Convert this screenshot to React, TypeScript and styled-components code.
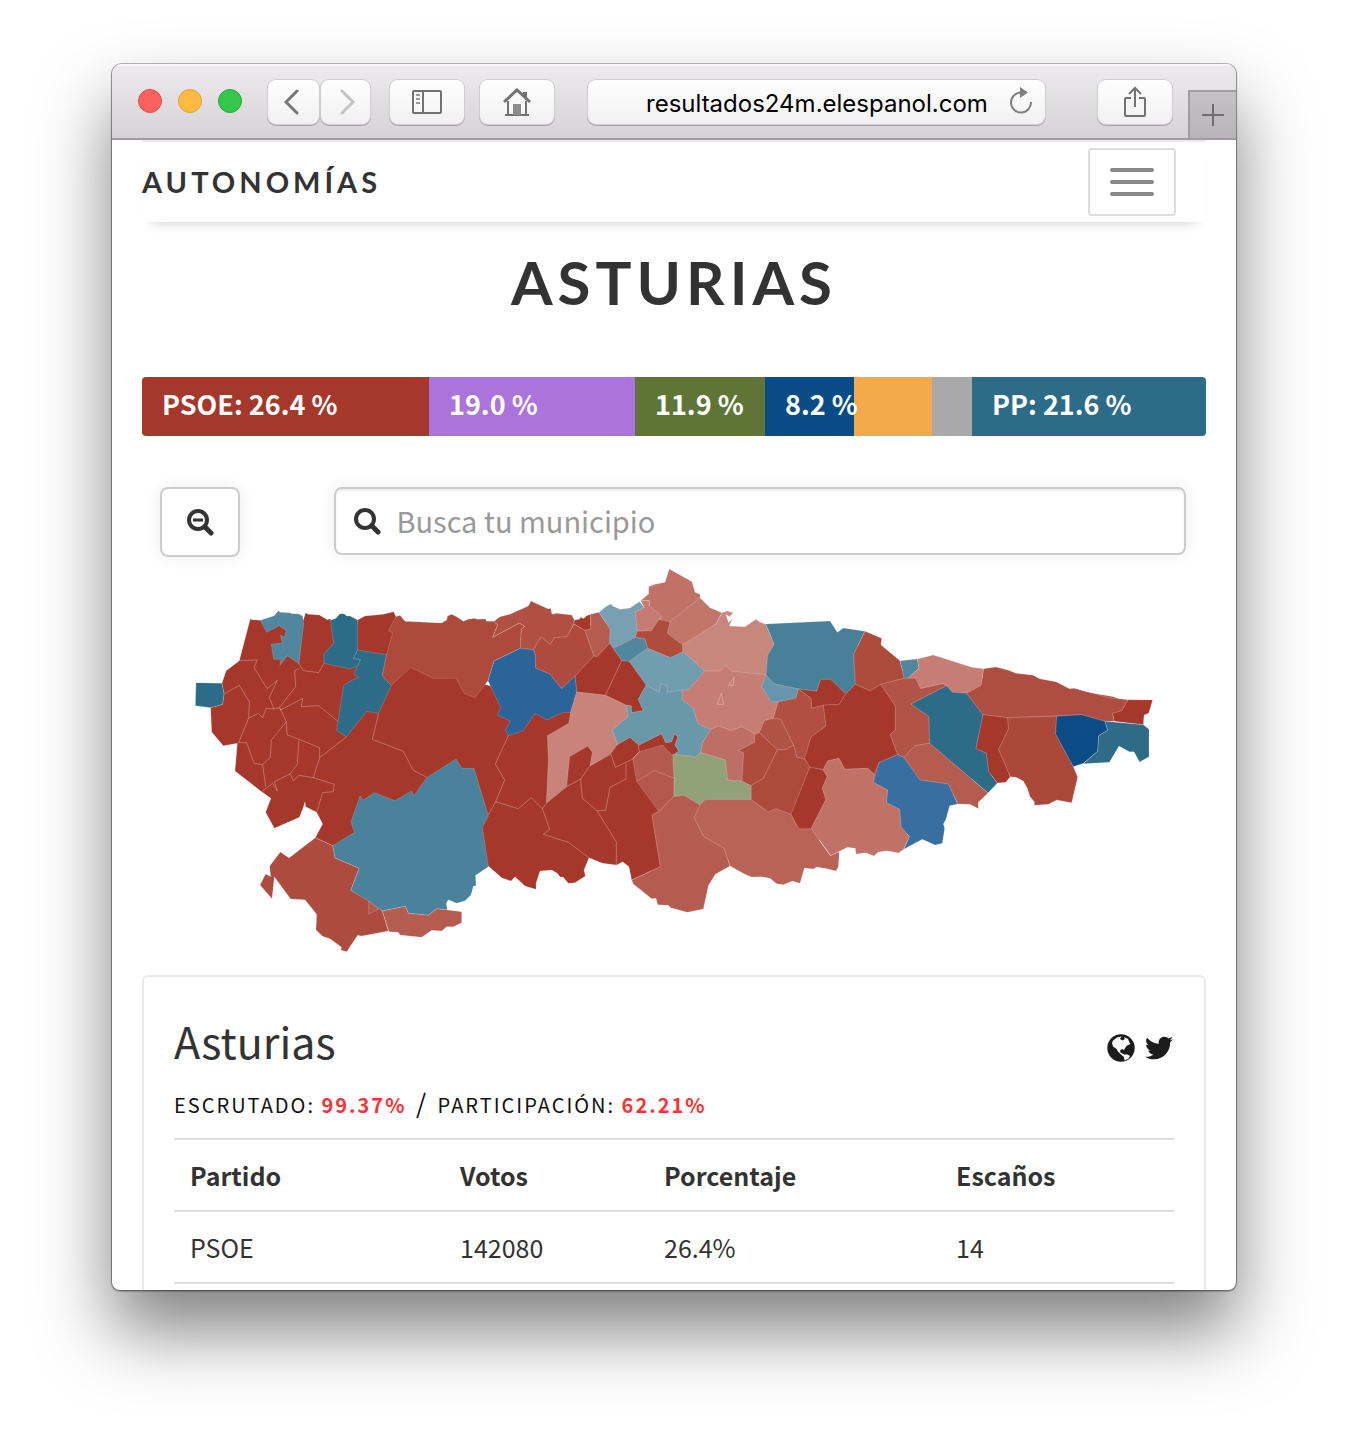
import React from "react";
import styled, { createGlobalStyle } from "styled-components";
import { FaTwitter } from "react-icons/fa";

const sans = `"Noto Sans CJK SC", "Noto Sans", sans-serif`;
const display = `Lato, "Open Sans", sans-serif`;

const GlobalStyle = createGlobalStyle`
  * { box-sizing: border-box; }
  body { margin: 0; background: #fff; color: #333; font-family: ${sans}; }
  button, input { font: inherit; color: inherit; margin: 0; }
  button { padding: 0; cursor: pointer; }
`;

const Desktop = styled.div`
  height: 100vh;
  padding: 64px 112px 160px;
  overflow: hidden;
`;

const Window = styled.div`
  height: 100%;
  display: flex;
  flex-direction: column;
  overflow: hidden;
  background: #fff;
  border-radius: 10px 10px 8px 8px;
  box-shadow: 0 0 0 1px rgba(0, 0, 0, 0.25), 0 1px 1px 1px rgba(0, 0, 0, 0.22),
    0 40px 72px rgba(0, 0, 0, 0.5);
`;

const Toolbar = styled.header`
  flex: none;
  height: 76px;
  display: flex;
  align-items: center;
  padding: 2px 0 0 26px;
  background: linear-gradient(#edebee, #d5d3d6);
  border-bottom: 2px solid #9f9ba1;
  box-shadow: inset 0 2px 0 #f6f5f6;
`;

const Lights = styled.div`
  display: flex;
  gap: 16px;
  margin: 0 26px 2px 0;
`;

const Light = styled.button<{ $fill: string; $edge: string }>`
  width: 24px;
  height: 24px;
  border: 1px solid ${(p) => p.$edge};
  border-radius: 50%;
  background: ${(p) => p.$fill};
`;

const ToolGroup = styled.div`
  display: flex;
  gap: 16px;
`;

const Pair = styled.div`
  display: flex;
  gap: 2px;
  margin-right: 4px;
`;

const ToolButton = styled.button<{ $width: number }>`
  width: ${(p) => p.$width}px;
  height: 44px;
  display: flex;
  align-items: center;
  justify-content: center;
  border: 0;
  border-radius: 8px;
  background: linear-gradient(#fefefe, #f1f1f1);
  box-shadow: 0 0 0 1px #cfcdd0, 0 1px 0 1px #a9a7aa;
`;

const Address = styled.div`
  position: relative;
  flex: 1;
  margin: 0 53px 0 34px;
`;

const AddressInput = styled.input`
  display: block;
  width: 100%;
  height: 44px;
  padding: 2px 58px 0;
  border: 0;
  border-radius: 8px;
  outline: 0;
  background: linear-gradient(#fefefe, #f1f1f1);
  box-shadow: 0 0 0 1px #cfcdd0, 0 1px 0 1px #a9a7aa;
  color: #000;
  font-family: Inter, Roboto, sans-serif;
  font-size: 24px;
  text-align: center;
`;

const Reload = styled.button`
  position: absolute;
  top: 6px;
  right: 8px;
  width: 32px;
  height: 32px;
  border: 0;
  background: none;
`;

const NewTab = styled.button`
  align-self: flex-end;
  width: 48px;
  height: 48px;
  display: flex;
  align-items: center;
  justify-content: center;
  margin-left: 16px;
  border: solid #a19ea3;
  border-width: 2px 0 0 2px;
  background: linear-gradient(#c3c1c5, #b7b5b9);
`;

const Page = styled.main`
  flex: 1;
  min-height: 0;
  display: flex;
  flex-direction: column;
  padding: 0 30px;
`;

const NavBar = styled.nav`
  flex: none;
  display: flex;
  align-items: center;
  justify-content: space-between;
  height: 82px;
  padding-right: 30px;
  border-top: 2px solid #eceaed;
  box-shadow: 0 10px 12px -10px rgba(0, 0, 0, 0.22);
`;

const Brand = styled.a`
  color: #333;
  font: 700 29px/40px ${display};
  letter-spacing: 4px;
  text-decoration: none;
`;

const MenuButton = styled.button`
  width: 88px;
  height: 68px;
  display: flex;
  flex-direction: column;
  align-items: center;
  justify-content: center;
  gap: 8px;
  border: 2px solid #ddd;
  border-radius: 4px;
  background: #fff;
`;

const MenuLine = styled.span`
  width: 44px;
  height: 4px;
  border-radius: 2px;
  background: #888;
`;

const Title = styled.h1`
  flex: none;
  margin: 24px 0 59px;
  color: #333;
  font: 700 60px/72px ${display};
  letter-spacing: 5px;
  text-align: center;
`;

const Bar = styled.div`
  flex: none;
  display: flex;
  height: 59px;
`;

const Segment = styled.div<{ $share: number; $color: string }>`
  flex: ${(p) => p.$share} 1 0;
  min-width: 0;
  background: ${(p) => p.$color};
  color: #fff;
  font-size: 27px;
  font-weight: 700;
  line-height: 54px;
  white-space: nowrap;
  &:first-child { border-radius: 4px 0 0 4px; }
  &:last-child { border-radius: 0 4px 4px 0; }
`;

const SegmentLabel = styled.span`
  position: relative;
  z-index: 1;
  padding-left: 20px;
`;

const Controls = styled.div`
  flex: none;
  display: flex;
  align-items: flex-start;
  justify-content: space-between;
  margin: 51px 20px 0 18px;
`;

const ZoomOut = styled.button`
  width: 80px;
  height: 70px;
  display: flex;
  align-items: center;
  justify-content: center;
  border: 2px solid #ccc;
  border-radius: 8px;
  background: #fff;
  box-shadow: 0 0 16px rgba(0, 0, 0, 0.08);
`;

const SearchBox = styled.label`
  width: 83%;
  height: 68px;
  display: flex;
  align-items: center;
  gap: 15px;
  padding: 0 17px;
  border: 2px solid #ccc;
  border-radius: 8px;
  background: #fff;
  box-shadow: inset 0 2px 2px rgba(0, 0, 0, 0.07), 0 0 16px rgba(0, 0, 0, 0.08);
`;

const SearchInput = styled.input`
  flex: 1;
  min-width: 0;
  height: 60px;
  padding: 0 0 2px;
  border: 0;
  outline: 0;
  background: none;
  font-size: 29px;
  &::placeholder { color: #999; opacity: 1; }
`;

const MapFigure = styled.svg`
  flex: none;
  display: block;
  width: 100%;
  height: auto;
  margin: 3px 0 15px;
`;

const Card = styled.section`
  flex: 1;
  padding: 31px 30px 0;
  border: solid #eaeaea;
  border-width: 2px 2px 0;
  border-radius: 6px 6px 0 0;
`;

const CardHead = styled.div`
  display: flex;
  align-items: center;
  justify-content: space-between;
`;

const Region = styled.h2`
  margin: 0;
  font-size: 43px;
  font-weight: 400;
  line-height: 64px;
`;

const Share = styled.div`
  display: flex;
  gap: 10px;
  padding: 16px 1px 0 0;
`;

const ShareLink = styled.a`
  display: flex;
  color: #1c1c1c;
`;

const Stats = styled.p`
  margin: 12px 0 15px;
  color: #111;
  font-size: 20px;
  line-height: 36px;
  letter-spacing: 2px;
  white-space: nowrap;
`;

const Figure = styled.strong`
  color: #ff3237;
`;

const Slash = styled.span`
  margin: 0 3px;
  font-size: 26px;
`;

const Results = styled.table`
  width: 100%;
  table-layout: fixed;
  border-collapse: collapse;
  text-align: left;
  font-size: 25px;
  line-height: 38px;
`;

const Row = styled.tr`
  height: 72px;
  border: solid #ddd;
  border-width: 2px 0;
`;

const Head = styled.th`
  padding: 0 16px;
`;

const Cell = styled.td`
  padding: 0 16px;
`;

const Glass = ({ minus = false }: { minus?: boolean }) => (
  <svg width="28" height="28" viewBox="0 0 28 28" fill="none" stroke="#333" aria-hidden="true">
    <circle cx="12" cy="12" r="9" strokeWidth="4" />
    <path d="M19 19l6 6" strokeWidth="5" strokeLinecap="round" />
    {minus && <path d="M7 12h10" strokeWidth="3" />}
  </svg>
);

const Globe = () => (
  <svg width="28" height="28" viewBox="0 0 28 28" aria-hidden="true">
    <circle cx="14" cy="14" r="13.700" fill="#1c1c1c" />
    <path
      fill="#fff"
      d="M6 6.500L10 3.500L14.500 2.500L13 5L15.500 6.500L18 5L17 3L21 5L22.500 8.500L23.500 10L20 11.500L18 14L17 16L15 15L13 16.500L13.500 18.500L17 20.500L20.500 20.500L23 22L21.500 24.500L17.500 26.500L17 23L13.500 20L11 17.500L9.500 15L6 12.500L5 9z"
    />
  </svg>
);

const Chevron = ({ d, color }: { d: string; color: string }) => (
  <svg width="20" height="26" viewBox="0 0 20 26" fill="none" stroke={color} strokeWidth="3" strokeLinecap="round" aria-hidden="true">
    <path d={d} />
  </svg>
);

const segments = [
  { share: 287, color: "#a5372b", label: "PSOE: 26.4 %" },
  { share: 206, color: "#ab73dc", label: "19.0 %" },
  { share: 130, color: "#5f7537", label: "11.9 %" },
  { share: 89, color: "#084b87", label: "8.2 %" },
  { share: 78, color: "#f3aa4b", label: "" },
  { share: 40, color: "#a9a9a9", label: "" },
  { share: 234, color: "#2d6c88", label: "PP: 21.6 %" },
];

type Area = [fill: string, points: string];

// Fills the hairline seams between the eastern areas.
const seamFill =
  "1020,240 1180,210 1300,180 1460,120 1560,140 1640,240 1950,230 2040,260 2200,350 2500,360 2800,410 2900,450 2780,470 2650,640 2560,680 2500,640 2440,640 2360,660 2280,740 2200,820 2030,840 1900,840 1640,900 1570,960 1540,1020 1440,980 1400,900 1300,700 1000,480";

// The map is kept in zones; each zone has its own origin on the shared grid.
const zones: { x: number; y: number; areas: Area[]; lines?: string[] }[] = [
  {
    x: 0,
    y: 0,
    areas: [
      ["#a5372b", "211,176 215,179 241,181 260,200 300,180 340,190 370,180 377,158 385,163 418,165 442,179 450,176 453,181 460,200 530,200 533,180 555,168 610,163 641,155 648,170 700,250 900,370 1020,400 1170,457 1220,500 1313,553 1350,532 1375,555 1445,521 1457,548 1475,545 1483,521 1494,530 1485,555 1496,573 1483,583 1460,700 1436,754 1416,765 1441,920 1355,960 1347,920 1328,905 1310,915 1268,910 1227,893 1218,915 1212,930 1216,948 1185,968 1165,970 1150,952 1140,950 1132,940 1115,930 1080,933 1068,970 1068,988 1035,978 1005,950 993,963 965,953 925,918 850,850 700,850 458,857 406,833 428,792 410,757 377,740 375,725 370,742 358,772 283,805 257,757 273,715 245,695 165,633 172,550 130,557 95,516 92,443 128,433 132,402 126,370 138,333 178,302"],
      ["#50869e", "241,181 283,167 295,152 300,157 330,158 335,161 355,161 368,168 371,190 357,311 322,287 300,316 303,298 281,298 274,252 307,250 301,225 313,232 319,212 298,197 260,217"],
      ["#2c6c88", "451,181 468,175 478,163 485,161 492,161 500,168 510,168 533,180 533,270 521,296 542,298 533,318 510,327 432,310 431,283 461,249"],
      ["#2c6c88", "533,270 620,284 607,347 634,376 596,460 560,454 499,531 470,511 491,376 512,362 536,353 521,343 542,298 521,296"],
      ["#2c6c88", "48,368 126,370 132,402 128,433 92,443 46,437"],
      ["#ad4a3b", "648,170 660,166 675,184 765,188 785,189 800,180 803,168 815,163 830,170 850,184 865,178 885,175 890,178 916,177 920,184 942,184 953,195 938,232 1018,189 1034,199 1024,208 1021,265 942,303 924,362 885,413 852,400 828,355 760,355 692,322 634,376 607,347 620,284 638,218 625,212"],
    ],
    lines: [
      "180,302 232,300 222,322 261,386 292,361 268,413 282,447 298,443 347,380 344,332 357,326",
      "357,311 370,332 416,338 432,310",
      "132,402 178,376 208,425 206,474 176,548",
      "206,474 235,460 248,473 258,445 282,447",
      "298,443 302,450 368,415 364,440 416,437 475,485",
      "300,445 319,485 274,540 271,592 248,614 222,610 200,548 176,548",
      "319,485 321,524 357,538 419,563 419,593 400,653",
      "357,538 352,613 330,642",
      "499,531 419,593",
      "248,614 257,680",
      "245,695 278,670 292,693 283,665 330,642 340,662 357,646 400,653 463,673 460,695 428,698 410,757",
      "596,460 577,538 670,574 700,631 740,652",
    ],
  },
  {
    x: 720,
    y: 0,
    areas: [
      ["#b04f42", "222,184 240,170 270,163 325,138 333,123 385,147 392,145 396,163 410,160 455,165 463,180 462,192 441,230 403,233 391,254 363,231 340,269 301,265 304,208 314,199 298,189 218,232 233,195"],
      ["#ae4b3e", "462,192 495,211 522,288 465,348 425,386 389,342 347,325 346,287 340,269 363,231 391,254 403,233 441,230"],
      ["#a5372b", "463,180 478,178 483,171 490,176 500,167 512,163 512,208 495,211 462,192"],
      ["#b55c50", "512,163 537,157 571,208 569,250 532,290 522,288 495,211 512,208"],
      ["#789fb2", "537,157 560,138 573,132 578,138 600,148 630,144 658,125 673,142 648,157 653,214 646,232 581,265 569,250 571,208"],
      ["#50869e", "581,265 646,232 675,236 683,265 628,304 605,302"],
      ["#a5372b", "465,348 522,288 532,290 569,250 605,302 628,304 680,375 655,418 670,452 634,458 634,438 619,436 556,406 470,396"],
      ["#2a6499", "222,303 301,265 340,269 346,287 347,325 389,342 425,386 465,348 470,396 452,457 430,457 380,480 346,460 308,513 265,527 256,511 270,483 232,465 242,442 204,362"],
      ["#c8837b", "470,396 556,406 619,436 624,470 577,510 593,553 573,580 510,617 517,577 503,558 449,590 440,680 379,730 385,600 382,527 446,490 452,457"],
    ],
    lines: ["605,302 556,406", "265,527 226,612 254,660 227,725 205,765"],
  },
  {
    x: 1200,
    y: 0,
    areas: [
      ["#c07266", "268,27 336,65 345,97 360,103 360,115 270,185 238,179 208,137 208,122 182,122 206,102 206,80 225,73 255,67"],
      ["#c67b72", "182,122 208,122 208,137 244,168 238,179 214,212 172,214 166,157 193,142"],
      ["#c27569", "360,113 390,143 426,158 408,192 308,255 262,220 270,185"],
      ["#ae4c3e", "244,168 238,179 270,185 262,220 308,255 310,275 271,293 203,265 195,236 166,232 172,214 214,212"],
      ["#c8877d", "426,158 442,153 460,158 448,170 457,178 448,198 495,200 528,178 540,187 557,192 583,252 563,285 560,345 455,334 438,315 420,334 374,333 308,275 308,255 408,192"],
      ["#709db0", "203,265 271,293 310,275 374,333 325,390 262,397 262,378 243,370 238,397 198,375 148,304"],
      ["#6a98ab", "198,375 238,397 243,370 262,378 262,397 307,390 307,418 340,445 354,491 392,508 368,548 362,578 347,591 283,583 296,573 285,555 294,530 283,521 275,545 257,548 245,521 178,555 150,532 113,553 97,510 144,470 139,436 154,438 154,458 190,452 175,418"],
      ["#c67d74", "374,333 420,334 438,315 455,334 558,345 545,380 573,425 595,425 580,475 553,482 538,518 525,522 486,500 455,512 415,498 392,508 354,491 340,445 307,418 307,390 325,390"],
      ["#48809a", "557,192 750,183 772,217 790,204 855,214 821,283 826,373 797,402 752,358 722,358 710,394 655,387 583,372 558,345 563,285 583,252"],
      ["#6795ab", "558,345 583,372 655,387 648,415 595,425 573,425 545,380"],
      ["#a5372b", "655,387 710,394 722,358 752,358 797,402 778,433 731,436 695,445 693,415"],
      ["#b04f42", "595,425 648,415 655,387 693,415 695,445 731,436 738,498 693,532 675,597 650,592 640,555 602,478 580,475"],
      ["#b15246", "538,518 553,482 580,475 602,478 640,555 620,568 592,570"],
      ["#be6f65", "392,508 415,498 455,512 486,500 525,522 524,547 475,572 491,578 486,664 442,660 436,600 362,578 368,548"],
      ["#ae4b3c", "525,522 538,518 592,570 550,655 513,677 486,664 491,578 475,572 524,547"],
      ["#ad4a3b", "592,570 620,568 640,555 650,592 675,597 690,620 634,765 590,747 565,757 513,718 513,677 550,655"],
      ["#92a278", "278,583 347,591 362,578 436,600 442,660 486,664 513,677 513,718 375,718 360,736 315,707 281,710 282,655"],
      ["#b55a4f", "178,575 248,555 278,588 282,655 222,632 170,664 158,595"],
      ["#b4584e", "222,632 282,655 281,710 236,754 170,664"],
      ["#ffffff", "437,163 457,176 446,188"],
    ],
    lines: ["424,400 431,433 412,433 424,400", "462,352 460,376 446,376 462,352", "178,575 175,555"],
  },
  {
    x: 900,
    y: 540,
    areas: [
      ["#b55c51", "580,170 612,166 660,195 643,233 670,288 733,326 750,378 706,403 685,437 670,507 622,517 572,503 565,496 533,494 528,475 515,476 460,432 455,420 541,380 516,225 536,215"],
      ["#b96357", "675,179 812,179 865,216 886,206 933,223 957,266 993,266 1051,347 1078,335 1075,380 1068,393 1035,385 1010,381 1000,387 973,384 960,430 937,423 910,434 890,431 870,415 845,410 815,411 795,403 750,378 733,326 670,288 643,233 660,195"],
      ["#a5372b", "933,223 990,80 1028,90 1042,108 1027,145 1037,180 993,266 957,266"],
    ],
    lines: [
      "47,185 115,206 154,173 187,206 209,268 190,283 265,307 327,353",
      "199,190 187,206",
      "260,140 302,117 330,77 393,43 406,82 457,58 478,35",
      "302,117 307,175 351,212 409,306 409,375",
      "351,212 377,211 390,142 438,117 438,70",
    ],
  },
  {
    x: 1860,
    y: 120,
    areas: [
      ["#ad4b3c", "195,94 245,115 243,135 300,182 313,235 242,253 211,273 166,253 161,163"],
      ["#50869e", "300,182 352,177 357,205 323,235 313,235"],
      ["#c67d74", "352,177 400,165 515,202 551,206 544,256 500,280 457,277 440,257 428,251 362,266 347,235 323,235 357,205"],
      ["#a5372b", "166,253 211,273 242,253 286,317 286,390 271,404 293,464 237,488 223,523 203,505 134,508 117,475 83,483 70,508 30,502 14,475 33,411 78,378 70,315 118,313 137,282"],
      ["#b15347", "242,253 313,235 347,235 362,266 428,251 440,257 333,312 387,350 389,430 345,437 311,472 293,464 271,404 286,390 286,317"],
      ["#2c6c88", "440,257 457,277 500,280 549,344 528,446 559,459 566,514 592,549 564,579 389,430 387,350 333,312"],
      ["#b55c50", "389,430 564,579 535,607 535,626 510,613 473,612 445,552 360,540 311,472 345,437"],
      ["#386ea0", "293,464 311,472 360,540 445,552 473,612 449,617 437,660 430,672 434,685 427,730 405,735 367,718 311,748 328,710 303,680 299,628 259,608 263,570 220,547 237,488"],
      ["#c17267", "117,475 134,508 203,505 223,523 220,547 263,570 259,608 299,628 303,680 328,710 311,748 295,759 262,752 235,756 222,768 198,758 168,762 166,745 142,742 92,767 34,685 78,598 67,565 82,530 70,508 83,483"],
      ["#ae4d41", "551,206 588,201 625,211 648,220 700,226 718,236 770,246 808,266 822,265 925,293 984,299 966,332 938,340 943,364 915,364 845,344 623,353 549,344 500,280 544,256"],
      ["#a5372b", "984,299 1058,300 1046,340 1032,345 1030,374 943,364 938,340 966,332"],
      ["#a5372b", "549,344 623,353 626,386 596,448 631,530 617,547 592,549 566,514 559,459 528,446"],
      ["#ab483a", "623,353 770,349 767,402 820,500 833,532 815,608 770,600 745,613 703,616 703,605 690,590 682,565 670,543 648,532 631,530 596,448 626,386"],
      ["#0b4c87", "770,349 845,344 915,364 923,391 896,407 893,454 850,490 820,500 767,402"],
      ["#2d6b86", "915,364 1030,374 1047,388 1047,470 1019,486 1002,455 988,455 957,438 928,487 850,491 893,454 896,407 923,391"],
    ],
  },
  {
    x: 180,
    y: 570,
    areas: [
      ["#4a819b", "278,287 343,247 333,215 360,138 370,150 403,128 465,152 515,123 521,138 560,83 648,27 666,55 702,55 745,198 727,232 745,350 707,376 708,407 700,409 693,435 675,452 650,460 625,449 619,460 622,480 590,476 565,496 505,490 496,469 427,483 332,421 357,355 285,324"],
      ["#ae4b3f", "226,263 278,287 285,324 357,355 332,421 386,453 427,483 445,543 365,558 353,556 320,605 302,600 305,592 270,566 248,559 228,540 230,493 195,449 152,447 103,380 96,446 60,405 77,372 92,380 89,348 121,306 147,324"],
      ["#b4584c", "386,453 415,478 386,492"],
      ["#b55c50", "427,483 496,469 505,490 565,496 590,476 622,480 665,485 665,518 640,530 620,530 605,543 575,541 545,562 480,555 475,547 447,545"],
    ],
  },
];

const ElectionMap = () => (
  <MapFigure viewBox="-114 0 3192 1200" role="img" aria-label="Asturias">
    <polygon points={seamFill} fill="#b2564a" />
    {zones.map((zone) => (
      <g key={`${zone.x}-${zone.y}`} transform={`translate(${zone.x} ${zone.y})`} strokeLinejoin="round">
        {zone.areas.map(([fill, points]) => (
          <polygon key={points} points={points} fill={fill} stroke="#fff" strokeOpacity="0.25" strokeWidth="2" />
        ))}
        {zone.lines?.map((points) => (
          <polyline key={points} points={points} fill="none" stroke="#fff" strokeOpacity="0.28" strokeWidth="3" />
        ))}
      </g>
    ))}
  </MapFigure>
);

export default function App() {
  return (
    <Desktop>
      <GlobalStyle />
      <Window>
        <Toolbar>
          <Lights>
            <Light $fill="#fc615d" $edge="#e2504c" aria-label="Cerrar" />
            <Light $fill="#fdbc40" $edge="#dea034" aria-label="Minimizar" />
            <Light $fill="#34c84a" $edge="#27aa35" aria-label="Ampliar" />
          </Lights>
          <ToolGroup>
            <Pair>
              <ToolButton $width={51} aria-label="Atrás"><Chevron d="M13 2L2 13l11 11" color="#777" /></ToolButton>
              <ToolButton $width={49} aria-label="Adelante"><Chevron d="M6 2l11 11L6 24" color="#c4c4c4" /></ToolButton>
            </Pair>
            <ToolButton $width={74} aria-label="Barra lateral">
              <svg width="30" height="24" viewBox="0 0 30 24" fill="none" stroke="#727272" strokeWidth="2" aria-hidden="true">
                <rect x="1" y="1" width="28" height="22" rx="1" />
                <path d="M11 1v22" />
                <path d="M4 5h4M4 9h4M4 13h4" stroke="#999" />
              </svg>
            </ToolButton>
            <ToolButton $width={74} aria-label="Inicio">
              <svg width="28" height="28" viewBox="0 0 28 28" fill="none" stroke="#727272" strokeWidth="2" aria-hidden="true">
                <path d="M2 27h24M5 26V13M23 26V13" />
                <path d="M1 14L14 2l13 12" strokeWidth="3" />
                <path d="M20 4h4v7l-4-4z" fill="#727272" stroke="none" />
                <path d="M10 16h8v11h-8z" fill="#8c8c8c" stroke="none" />
              </svg>
            </ToolButton>
          </ToolGroup>
          <Address>
            <AddressInput aria-label="Dirección" defaultValue="resultados24m.elespanol.com" />
            <Reload aria-label="Recargar">
              <svg width="28" height="30" viewBox="0 0 28 30" fill="none" stroke="#808080" strokeWidth="2" aria-hidden="true">
                <path d="M14 6.500A10 10 0 1 0 24 16" />
                <path d="M13 1l8 5.500-8 5.500z" fill="#808080" stroke="none" />
              </svg>
            </Reload>
          </Address>
          <ToolButton $width={74} aria-label="Compartir">
            <svg width="24" height="32" viewBox="0 0 24 32" fill="none" stroke="#727272" strokeWidth="2" aria-hidden="true">
              <path d="M8 12H3q-1 0-1 1v16q0 1 1 1h18q1 0 1-1V13q0-1-1-1h-5" />
              <path d="M12 21V3M6 8l6-6 6 6" />
            </svg>
          </ToolButton>
          <NewTab aria-label="Nueva pestaña">
            <svg width="22" height="22" viewBox="0 0 22 22" stroke="#6f6d71" strokeWidth="2" aria-hidden="true">
              <path d="M11 0v22M0 11h22" />
            </svg>
          </NewTab>
        </Toolbar>
        <Page>
          <NavBar>
            <Brand href="#">AUTONOMÍAS</Brand>
            <MenuButton aria-label="Menú">
              <MenuLine />
              <MenuLine />
              <MenuLine />
            </MenuButton>
          </NavBar>
          <Title>ASTURIAS</Title>
          <Bar>
            {segments.map((s) => (
              <Segment key={s.color} $share={s.share} $color={s.color}>
                {s.label && <SegmentLabel>{s.label}</SegmentLabel>}
              </Segment>
            ))}
          </Bar>
          <Controls>
            <ZoomOut aria-label="Alejar"><Glass minus /></ZoomOut>
            <SearchBox>
              <Glass />
              <SearchInput type="text" aria-label="Busca tu municipio" placeholder="Busca tu municipio" />
            </SearchBox>
          </Controls>
          <ElectionMap />
          <Card>
            <CardHead>
              <Region>Asturias</Region>
              <Share>
                <ShareLink href="#" aria-label="Web"><Globe /></ShareLink>
                <ShareLink href="#" aria-label="Twitter"><FaTwitter size={28} /></ShareLink>
              </Share>
            </CardHead>
            <Stats>
              ESCRUTADO: <Figure>99.37%</Figure> <Slash>/</Slash> PARTICIPACIÓN: <Figure>62.21%</Figure>
            </Stats>
            <Results>
              <colgroup>
                <col style={{ width: "27%" }} />
                <col style={{ width: "20.4%" }} />
                <col style={{ width: "29.2%" }} />
                <col />
              </colgroup>
              <thead>
                <Row>
                  <Head scope="col">Partido</Head>
                  <Head scope="col">Votos</Head>
                  <Head scope="col">Porcentaje</Head>
                  <Head scope="col">Escaños</Head>
                </Row>
              </thead>
              <tbody>
                <Row>
                  <Cell>PSOE</Cell>
                  <Cell>142080</Cell>
                  <Cell>26.4%</Cell>
                  <Cell>14</Cell>
                </Row>
              </tbody>
            </Results>
          </Card>
        </Page>
      </Window>
    </Desktop>
  );
}
